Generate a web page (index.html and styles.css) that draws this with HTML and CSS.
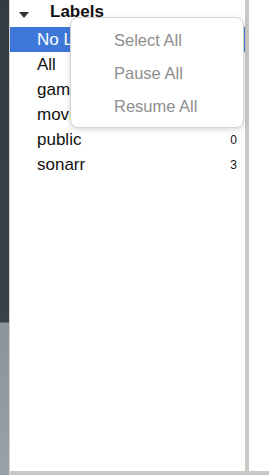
FILE: index.html
```html
<!DOCTYPE html>
<html lang="en">
<head>
  <meta charset="UTF-8">
  <title>Labels</title>
  <link rel="stylesheet" href="styles.css">
</head>
<body>
  <div class="dock"></div>
  <div class="main">
    <div class="sidebar">
      <div class="group-head">
        <span class="caret"></span>
        <span class="group-title">Labels</span>
      </div>
      <ul class="labels">
        <li class="selected"><span>No Label</span><span class="count"></span></li>
        <li><span>All</span><span class="count"></span></li>
        <li><span>games</span><span class="count"></span></li>
        <li><span>movies</span><span class="count"></span></li>
        <li><span>public</span><span class="count">0</span></li>
        <li><span>sonarr</span><span class="count">3</span></li>
      </ul>
      <div class="menu">
        <div class="menu-item">Select All</div>
        <div class="menu-item">Pause All</div>
        <div class="menu-item">Resume All</div>
      </div>
    </div>
    <div class="divider"></div>
    <div class="content"></div>
  </div>
</body>
</html>
```

FILE: styles.css
```css
html, body {
  margin: 0;
  height: 475px;
  overflow: hidden;
}
body {
  display: flex;
  font-family: "Liberation Sans", Arial, sans-serif;
  background-color: #fff;
}
.dock {
  width: 9px;
  flex: none;
  background: linear-gradient(#353b43 0, #3a4049 322px, #8d939b 323px, #9aa0a7 475px);
  border-right: 1px solid #d6d3cf;
}
.main {
  flex: 1;
  display: flex;
  border-bottom: 4px solid #cbc7c2;
}
.sidebar {
  position: relative;
  width: 235px;
  flex: none;
  background-color: #fff;
}
.group-head {
  height: 27px;
  display: flex;
  align-items: center;
  padding-left: 9px;
}
.caret {
  width: 0;
  height: 0;
  border-left: 5px solid transparent;
  border-right: 5px solid transparent;
  border-top: 6px solid #333;
  margin-right: 21px;
  margin-top: 2px;
}
.group-title {
  font-weight: bold;
  font-size: 17px;
  color: #111;
  margin-top: -4px;
}
.labels {
  list-style: none;
  margin: 0;
  padding: 0;
}
.labels li {
  height: 25px;
  display: flex;
  align-items: center;
  justify-content: space-between;
  padding: 0 8px 0 27px;
  font-size: 17px;
  color: #111;
}
.labels li.selected {
  background-color: #3d78d9;
  color: #fff;
}
.count {
  font-size: 12px;
}
.menu {
  position: absolute;
  left: 60px;
  top: 17px;
  width: 174px;
  height: 111px;
  box-sizing: border-box;
  padding-top: 6px;
  background-color: #fff;
  border: 1px solid #d4d4d4;
  border-radius: 8px;
  box-shadow: 0 2px 6px rgba(0,0,0,0.15);
}
.menu-item {
  height: 33px;
  line-height: 33px;
  padding-left: 43px;
  font-size: 16.5px;
  color: #8e8e8e;
}
.divider {
  width: 4px;
  flex: none;
  background-color: #cbc7c2;
}
.content {
  flex: 1;
  background-color: #fff;
}
```
